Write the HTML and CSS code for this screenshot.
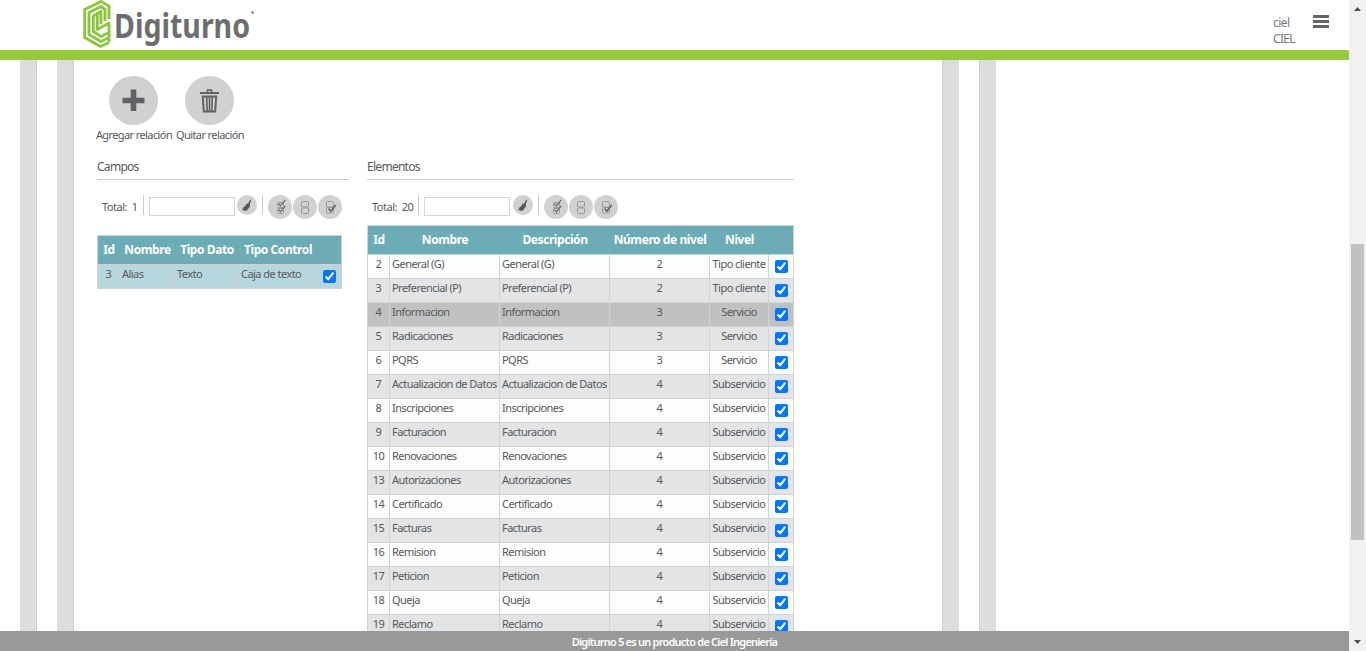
FILE: index.html
```html
<!DOCTYPE html>
<html lang="es">
<head>
<meta charset="utf-8">
<title>Digiturno</title>
<link rel="stylesheet" href="styles.css">
</head>
<body>
<svg width="0" height="0" class="defs">
  <symbol id="broom" viewBox="0 0 20 20"><path d="M13.200 4.500l1 .5-1.400 4.200 .2 2.200-3.500 4.400c-1.700.2-3.400-.3-4.500-1.600l1.300-.6-.3-.8c1.700-1 2.600-2.300 3.600-4.100l1.500-.3z" fill="#58585b"/></symbol>
  <symbol id="all" viewBox="0 0 24 24"><g fill="none" stroke="#98989a"><rect x="9.500" y="7.500" width="6" height="5" rx="1"/><rect x="9.500" y="13.500" width="6" height="5" rx="1"/></g><path d="M10.500 8.500l2 2.300 4.800-6M10.500 14.500l2 2.300 4.800-6" fill="none" stroke="#67676a" stroke-width="1.200"/></symbol>
  <symbol id="none" viewBox="0 0 24 24"><g fill="none" stroke="#98989a"><rect x="8.500" y="6.500" width="7" height="5.500" rx="1"/><rect x="8.500" y="13" width="7" height="5.500" rx="1"/></g></symbol>
  <symbol id="invert" viewBox="0 0 24 24"><g fill="none" stroke="#98989a"><rect x="8.500" y="6.500" width="7" height="5.500" rx="1"/><rect x="8.500" y="12.500" width="7" height="5.500" rx="1"/></g><path d="M10.500 13.500l2.300 2.800 5-6.300" fill="none" stroke="#5c5c5f" stroke-width="1.400"/></symbol>
</svg>
<div class="app">
  <div class="page">
    <header class="top">
      <svg class="logo" width="178" height="50" viewBox="0 0 178 50">
        <g fill="none" stroke="#8cc63f" stroke-width="2.900" stroke-linejoin="round">
          <path d="M26 19V6L18 1.500 1.700 9.500V37.500L17.500 46.500 26 42.500"/>
          <path d="M22 21V9.500L18 6.500 6 12.500V34.500L18 41.500 26 37.500"/>
          <path d="M18 24V11.500L10.300 16V31.500L18 36.500 26 32.500"/>
          <path d="M14.300 14V29.500L26 23V42"/>
        </g>
        <text class="logo-text" x="31" y="38" textLength="136" lengthAdjust="spacingAndGlyphs">Digiturno</text>
        <circle cx="169.500" cy="12.500" r="1.300" fill="#77787b"/>
      </svg>
      <div class="user"><span>ciel</span><span class="org">CIEL</span></div>
      <svg class="menu" width="16" height="13"><path d="M0 1.500h16M0 6.500h16M0 11.500h16" stroke="#636466" stroke-width="3"/></svg>
    </header>
    <main class="view">
      <div class="frame"><div class="frame inner">
        <div class="actions">
          <div class="action"><svg width="49" height="49"><circle cx="24.500" cy="24.500" r="24.500" fill="#d1d1d1"/><path d="M24.500 13.500v21.500M13.500 24.500h22" stroke="#626166" stroke-width="5.600"/></svg><span>Agregar relación</span></div>
          <div class="action"><svg width="49" height="49"><circle cx="24.500" cy="24.500" r="24.500" fill="#d1d1d1"/><g fill="none" stroke="#626166"><path d="M15 17h19" stroke-width="2"/><path d="M22.500 16v-2h4v2" stroke-width="1.500"/><path d="M17.800 20.500l1 15h11.400l1-15z" stroke-width="2"/><path d="M21.700 21l.5 14M24.500 21v14M27.300 21l-.5 14" stroke-width="1.600"/></g></svg><span>Quitar relación</span></div>
        </div>
        <div class="lists">
          <section class="fields">
            <h2>Campos</h2>
            <div class="tools">
              <span class="total">Total:&nbsp; 1</span>
              <input class="filter" type="text">
              <svg class="round clean"><use href="#broom"/></svg>
              <div class="marks"><svg class="round"><use href="#all"/></svg><svg class="round"><use href="#none"/></svg><svg class="round"><use href="#invert"/></svg></div>
            </div>
            <table class="grid grid-fields">
              <colgroup><col class="c22"><col class="c54"><col class="c65"><col class="c78"><col class="c25"></colgroup>
              <tr><th>Id</th><th>Nombre</th><th>Tipo Dato</th><th>Tipo Control</th><th></th></tr>
              <tr class="picked"><td class="mid">3</td><td>Alias</td><td>Texto</td><td>Caja de texto</td><td class="chk"><input type="checkbox" checked></td></tr>
            </table>
          </section>
          <section class="items">
            <h2>Elementos</h2>
            <div class="tools">
              <span class="total">Total:&nbsp; 20</span>
              <input class="filter" type="text">
              <svg class="round clean"><use href="#broom"/></svg>
              <div class="marks"><svg class="round"><use href="#all"/></svg><svg class="round"><use href="#none"/></svg><svg class="round"><use href="#invert"/></svg></div>
            </div>
            <table class="grid grid-items">
              <colgroup><col class="c22"><col class="c110"><col class="c110"><col class="c100"><col class="c59"><col class="c25"></colgroup>
              <tr><th>Id</th><th>Nombre</th><th>Descripción</th><th>Número de nivel</th><th>Nivel</th><th></th></tr>
              <tr><td class="mid">2</td><td>General (G)</td><td>General (G)</td><td class="mid">2</td><td class="mid">Tipo cliente</td><td class="chk"><input type="checkbox" checked></td></tr>
              <tr class="alt"><td class="mid">3</td><td>Preferencial (P)</td><td>Preferencial (P)</td><td class="mid">2</td><td class="mid">Tipo cliente</td><td class="chk"><input type="checkbox" checked></td></tr>
              <tr class="hover"><td class="mid">4</td><td>Informacion</td><td>Informacion</td><td class="mid">3</td><td class="mid">Servicio</td><td class="chk"><input type="checkbox" checked></td></tr>
              <tr class="alt"><td class="mid">5</td><td>Radicaciones</td><td>Radicaciones</td><td class="mid">3</td><td class="mid">Servicio</td><td class="chk"><input type="checkbox" checked></td></tr>
              <tr><td class="mid">6</td><td>PQRS</td><td>PQRS</td><td class="mid">3</td><td class="mid">Servicio</td><td class="chk"><input type="checkbox" checked></td></tr>
              <tr class="alt"><td class="mid">7</td><td>Actualizacion de Datos</td><td>Actualizacion de Datos</td><td class="mid">4</td><td class="mid">Subservicio</td><td class="chk"><input type="checkbox" checked></td></tr>
              <tr><td class="mid">8</td><td>Inscripciones</td><td>Inscripciones</td><td class="mid">4</td><td class="mid">Subservicio</td><td class="chk"><input type="checkbox" checked></td></tr>
              <tr class="alt"><td class="mid">9</td><td>Facturacion</td><td>Facturacion</td><td class="mid">4</td><td class="mid">Subservicio</td><td class="chk"><input type="checkbox" checked></td></tr>
              <tr><td class="mid">10</td><td>Renovaciones</td><td>Renovaciones</td><td class="mid">4</td><td class="mid">Subservicio</td><td class="chk"><input type="checkbox" checked></td></tr>
              <tr class="alt"><td class="mid">13</td><td>Autorizaciones</td><td>Autorizaciones</td><td class="mid">4</td><td class="mid">Subservicio</td><td class="chk"><input type="checkbox" checked></td></tr>
              <tr><td class="mid">14</td><td>Certificado</td><td>Certificado</td><td class="mid">4</td><td class="mid">Subservicio</td><td class="chk"><input type="checkbox" checked></td></tr>
              <tr class="alt"><td class="mid">15</td><td>Facturas</td><td>Facturas</td><td class="mid">4</td><td class="mid">Subservicio</td><td class="chk"><input type="checkbox" checked></td></tr>
              <tr><td class="mid">16</td><td>Remision</td><td>Remision</td><td class="mid">4</td><td class="mid">Subservicio</td><td class="chk"><input type="checkbox" checked></td></tr>
              <tr class="alt"><td class="mid">17</td><td>Peticion</td><td>Peticion</td><td class="mid">4</td><td class="mid">Subservicio</td><td class="chk"><input type="checkbox" checked></td></tr>
              <tr><td class="mid">18</td><td>Queja</td><td>Queja</td><td class="mid">4</td><td class="mid">Subservicio</td><td class="chk"><input type="checkbox" checked></td></tr>
              <tr class="alt"><td class="mid">19</td><td>Reclamo</td><td>Reclamo</td><td class="mid">4</td><td class="mid">Subservicio</td><td class="chk"><input type="checkbox" checked></td></tr>
            </table>
          </section>
        </div>
      </div></div>
    </main>
    <footer class="foot"><span>Digiturno 5 es un producto de Ciel Ingeniería</span></footer>
  </div>
  <aside class="bar">
    <svg width="17" height="17"><path d="M5 11h7L8.500 7z" fill="#505050"/></svg>
    <div class="thumb"></div>
    <svg class="down" width="17" height="17"><path d="M5 6h7l-3.500 4z" fill="#505050"/></svg>
  </aside>
</div>
</body>
</html>
```

FILE: styles.css
```css
* { box-sizing: border-box; }
body { margin: 0; overflow: hidden; background: #fff; color: #58585b; font-family: "Noto Sans", "Open Sans", sans-serif; font-stretch: 87.5%; font-size: 11px; letter-spacing: -0.54px; }
.defs { display: none; }
svg { display: block; flex: none; }
.app { display: flex; width: 1366px; height: 651px; }
.page { flex: 1; display: flex; flex-direction: column; min-width: 0; }

.top { height: 60px; flex: none; display: flex; border-bottom: 10px solid #97c93d; padding-left: 83px; }
.logo { overflow: visible; }
.logo-text { font: 700 34px "Noto Sans", sans-serif; fill: #6d6e71; letter-spacing: 0; }
.user { display: flex; flex-direction: column; margin-left: auto; width: 40px; padding-top: 15px; font-size: 12px; line-height: 16px; color: #77787b; }
.org { letter-spacing: -0.7px; }
.menu { margin: 15px 20px 0 0; }

.view { flex: 1; min-height: 0; overflow: hidden; }
.frame { width: 976px; height: 571px; margin-left: 20px; border: solid #ddd; border-width: 0 16px; box-shadow: inset 1px 0 #cfcfcf, inset -1px 0 #cfcfcf; padding: 0 21px; }
.frame.inner { width: 902px; margin: 0; padding: 16px 0 0 23px; }

.actions { display: flex; height: 84px; }
.action { width: 76px; display: flex; flex-direction: column; align-items: center; }
.action span { text-align: center; line-height: 16px; margin-top: 2px; white-space: nowrap; letter-spacing: -0.6px; }
.action svg { margin-right: 1px; }

.lists { display: flex; gap: 18px; margin-left: 1px; }
.fields { width: 252px; }
.items { width: 427px; }
h2 { margin: 0; height: 20px; border-bottom: 1px solid #ccc; font-weight: 400; font-size: 12px; line-height: 13px; letter-spacing: -0.72px; }
.tools { display: flex; height: 45px; padding: 15px 0 0 5px; }
.fields .tools { height: 55px; }
.total { width: 42px; height: 20px; line-height: 24px; border-right: 1px solid #ccc; white-space: pre; letter-spacing: -0.5px; }
.items .total { width: 47px; }
.filter { width: 86px; height: 19px; margin: 2px 0 0 5px; border: 1px solid #d6d6d6; padding: 0; background: #fff; }
.round { width: 24px; height: 24px; border-radius: 50%; background: #d1d1d1; }
.clean { width: 20px; height: 20px; margin-left: 2px; }
.items .clean { margin-left: 3px; }
.marks { display: flex; gap: 1px; height: 24px; margin-left: 5px; padding-left: 6px; background: linear-gradient(#ccc, #ccc) 0 0 / 1px 20px no-repeat; }

.grid { table-layout: fixed; border-spacing: 0; border: solid #d0d2d3; border-width: 1px 0 0 1px; }
.grid-fields { width: 245px; }
.grid-items { width: 427px; }
.c22 { width: 22px; } .c25 { width: 25px; } .c54 { width: 55px; } .c59 { width: 59px; } .c65 { width: 64px; }
.c78 { width: 78px; } .c100 { width: 100px; } .c110 { width: 110px; }
th { height: 29px; padding: 0; border-bottom: 1px solid #d0d2d3; background: #6cacb6; color: #fff; font-size: 12px; line-height: 16px; font-weight: 700; letter-spacing: -0.42px; white-space: nowrap; }
th:last-child { border-right: 1px solid #d0d2d3; }
td { height: 24px; padding: 0 0 0 2px; border: solid #d0d2d3; border-width: 0 1px 1px 0; background: #fdfdfd; vertical-align: top; line-height: 18px; white-space: nowrap; }
.mid { text-align: center; padding: 0; }
.alt td { background: #e2e4e6; }
.hover td { background: #bfc1c2; }
.picked td { background: #b6d7dd; }
.chk { padding: 5px 0 0 6px; line-height: 0; }
.chk input { display: block; width: 13px; height: 13px; margin: 0; }

.foot { height: 20px; flex: none; background: #999; color: #fff; font-weight: 600; line-height: 22px; text-align: center; letter-spacing: -0.78px; white-space: nowrap; }
.bar { width: 17px; background: #f1f1f1; display: flex; flex-direction: column; }
.thumb { width: 13px; height: 296px; margin: 227px 0 0 2px; background: #c1c1c1; }
.down { margin-top: auto; }
```
